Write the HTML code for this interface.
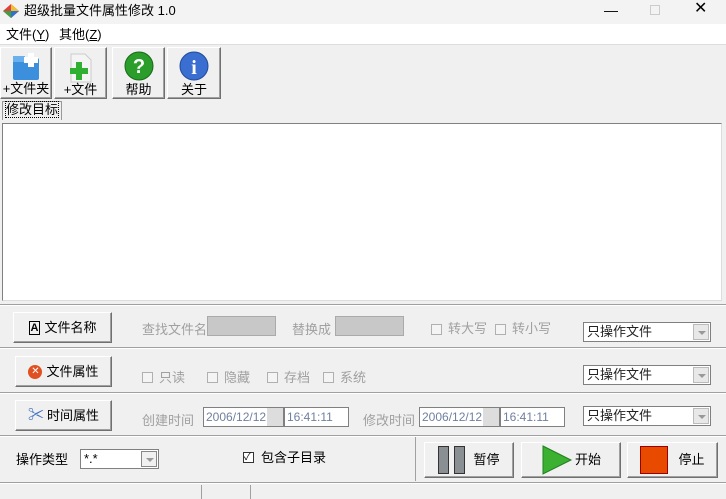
<!DOCTYPE html><html><head><meta charset="utf-8"><style>
*{margin:0;padding:0;box-sizing:border-box}
body{width:726px;height:499px;background:#f0f0f0;font:12px/16px "Liberation Sans","Noto Sans CJK SC",sans-serif;position:relative;overflow:hidden;color:#000}
.a{position:absolute}
.btn{position:absolute;background:#f0f0f0;border:1px solid;border-color:#fff #707070 #707070 #fff;box-shadow:inset -1px -1px #a0a0a0;display:flex;align-items:center;justify-content:center;font-size:13px}
.g{color:#a0a0a0;font-size:13px}
.cb{position:absolute;width:11px;height:11px;border:1px solid #b0b0b0;background:#f4f4f4}
.sel{position:absolute;background:#fff;border:1px solid #808080;height:20px;font-size:13px;line-height:16px;padding:1px 3px;color:#222}
.sel i{position:absolute;right:1px;top:1px;width:16px;height:16px;background:#e8e8e8;border:1px solid #bbb}
.sel i:after{content:"";position:absolute;left:4px;top:6px;border:4px solid transparent;border-top-color:#999}
.hl{position:absolute;left:0;width:726px;height:2px;border-top:1px solid #a0a0a0;border-bottom:1px solid #fff}
.dt{position:absolute;height:20px;border:1px solid #808080;background:#fff;color:#7080a0;font-size:12px;line-height:16px;padding:1px 2px}
</style></head><body>
<div class="a" style="left:0;top:0;width:726px;height:24px;background:#f3f3f3"></div>
<svg class="a" style="left:3px;top:4px" width="16" height="14"><polygon points="0,7 8,0 16,7 8,14" fill="#e04040"/><polygon points="8,0 16,7 8,7" fill="#f0c030"/><polygon points="0,7 8,7 8,14" fill="#40a040"/><polygon points="8,7 16,7 8,14" fill="#3070d0"/></svg>
<div class="a" style="left:24px;top:3px;font-size:13px">超级批量文件属性修改 1.0</div>
<div class="a" style="left:604px;top:2px;font-size:14px">—</div>
<div class="a" style="left:650px;top:5px;width:10px;height:10px;border:1px solid #ccc"></div>
<div class="a" style="left:694px;top:1px;font-size:16px">✕</div>
<div class="a" style="left:0;top:24px;width:726px;height:20px;background:#fff"></div>
<div class="a" style="left:6px;top:27px;font-size:13px">文件(<u>Y</u>)</div>
<div class="a" style="left:59px;top:27px;font-size:13px">其他(<u>Z</u>)</div>
<div class="a" style="left:0;top:44px;width:726px;height:1px;background:#ddd"></div>
<div class="btn" style="left:0;top:47px;width:52px;height:52px;flex-direction:column;justify-content:flex-end;padding-bottom:1px"><svg width="30" height="30" class="a" style="left:11px;top:4px"><rect x="1" y="6" width="26" height="22" rx="2" fill="#3b8fdc"/><rect x="1" y="4" width="12" height="6" fill="#6ab0ee"/><rect x="16" y="1" width="6" height="14" fill="#fff"/><rect x="12" y="5" width="14" height="6" fill="#fff"/></svg><span style="position:relative">+文件夹</span></div>
<div class="btn" style="left:54px;top:47px;width:53px;height:52px;flex-direction:column;justify-content:flex-end"><svg width="30" height="32" class="a" style="left:12px;top:4px"><path d="M4 2h14l6 6v22H4z" fill="#f4f4f4" stroke="#ccc"/><rect x="9" y="10" width="6" height="18" fill="#30b030"/><rect x="3" y="16" width="18" height="6" fill="#30b030"/></svg><span style="position:relative">+文件</span></div>
<div class="btn" style="left:112px;top:47px;width:53px;height:52px;flex-direction:column;justify-content:flex-end"><svg width="30" height="30" class="a" style="left:11px;top:3px"><circle cx="15" cy="15" r="14" fill="#2a9d2a" stroke="#1a6a1a"/><text x="15" y="22" font-size="20" font-weight="bold" fill="#fff" text-anchor="middle" font-family="Liberation Sans">?</text></svg><span style="position:relative">帮助</span></div>
<div class="btn" style="left:167px;top:47px;width:54px;height:52px;flex-direction:column;justify-content:flex-end"><svg width="30" height="30" class="a" style="left:11px;top:3px"><circle cx="15" cy="15" r="14" fill="#3a6ed0" stroke="#204a9a"/><text x="15" y="23" font-size="20" font-weight="bold" fill="#fff" text-anchor="middle" font-family="Liberation Serif">i</text></svg><span style="position:relative">关于</span></div>
<div class="a" style="left:2px;top:101px;width:60px;height:19px;border:1px solid #999;border-bottom:none;background:#f0f0f0;font-size:13px;padding-left:3px"><span style="outline:1px dotted #000">修改目标</span></div>
<div class="a" style="left:2px;top:123px;width:720px;height:178px;background:#fff;border:1px solid #808080;border-right-color:#ddd;border-bottom-color:#ddd"></div>
<div class="hl" style="top:304px"></div>
<div class="btn" style="left:13px;top:312px;width:99px;height:31px"><span style="border:1px solid #000;font-weight:bold;font-size:11px;line-height:12px;padding:0 1px;margin-right:4px">A</span>文件名称</div>
<div class="a g" style="left:142px;top:322px">查找文件名</div>
<div class="a" style="left:207px;top:316px;width:69px;height:20px;background:#c8c8c8;border:1px solid #aaa"></div>
<div class="a g" style="left:292px;top:322px">替换成</div>
<div class="a" style="left:335px;top:316px;width:69px;height:20px;background:#c8c8c8;border:1px solid #aaa"></div>
<div class="cb" style="left:431px;top:324px"></div><div class="a g" style="left:448px;top:321px">转大写</div>
<div class="cb" style="left:495px;top:324px"></div><div class="a g" style="left:512px;top:321px">转小写</div>
<div class="sel" style="left:583px;top:322px;width:128px">只操作文件<i></i></div>
<div class="hl" style="top:347px"></div>
<div class="btn" style="left:15px;top:356px;width:97px;height:31px"><span style="display:inline-block;width:14px;height:14px;border-radius:50%;background:#e05020;color:#fff;font-size:10px;line-height:14px;text-align:center;margin-right:4px">✕</span>文件属性</div>
<div class="cb" style="left:142px;top:372px"></div><div class="a g" style="left:159px;top:370px">只读</div>
<div class="cb" style="left:207px;top:372px"></div><div class="a g" style="left:224px;top:370px">隐藏</div>
<div class="cb" style="left:267px;top:372px"></div><div class="a g" style="left:284px;top:370px">存档</div>
<div class="cb" style="left:323px;top:372px"></div><div class="a g" style="left:340px;top:370px">系统</div>
<div class="sel" style="left:583px;top:365px;width:128px">只操作文件<i></i></div>
<div class="hl" style="top:392px"></div>
<div class="btn" style="left:15px;top:400px;width:97px;height:31px"><span style="color:#4070c0;margin-right:3px;font-size:16px">✂</span>时间属性</div>
<div class="a g" style="left:142px;top:413px">创建时间</div>
<div class="dt" style="left:203px;top:407px;width:81px">2006/12/12<span class="a" style="right:0;top:0;width:16px;height:18px;background:#ddd"></span></div>
<div class="dt" style="left:284px;top:407px;width:65px">16:41:11</div>
<div class="a g" style="left:363px;top:413px">修改时间</div>
<div class="dt" style="left:419px;top:407px;width:81px">2006/12/12<span class="a" style="right:0;top:0;width:16px;height:18px;background:#ddd"></span></div>
<div class="dt" style="left:500px;top:407px;width:65px">16:41:11</div>
<div class="sel" style="left:583px;top:406px;width:128px">只操作文件<i></i></div>
<div class="hl" style="top:435px"></div>
<div class="a" style="left:415px;top:437px;width:1px;height:44px;background:#a0a0a0"></div>
<div class="a" style="left:16px;top:452px;font-size:13px">操作类型</div>
<div class="sel" style="left:80px;top:449px;width:79px;height:20px;color:#000">*.*<i style="background:#f0f0f0;border-color:#888"></i></div>
<div class="cb" style="left:243px;top:452px;border-color:#333;background:#fff;font-size:10px;line-height:9px">✓</div>
<div class="a" style="left:261px;top:450px;font-size:13px">包含子目录</div>
<div class="btn" style="left:424px;top:442px;width:90px;height:36px"><span style="display:inline-block;width:11px;height:28px;background:#8a8f94;border:1px solid #333;margin-right:5px"></span><span style="display:inline-block;width:11px;height:28px;background:#8a8f94;border:1px solid #333;margin-right:8px"></span>暂停</div>
<div class="btn" style="left:521px;top:442px;width:100px;height:36px"><svg width="32" height="30" style="margin-right:2px"><polygon points="2,1 30,15 2,29" fill="#3cb030" stroke="#208020"/></svg>开始</div>
<div class="btn" style="left:627px;top:442px;width:91px;height:36px"><span style="display:inline-block;width:28px;height:28px;background:#e84a00;border:1px solid #900;margin-right:10px"></span>停止</div>
<div class="hl" style="top:482px"></div>
<div class="a" style="left:201px;top:485px;width:1px;height:14px;background:#a0a0a0"></div>
<div class="a" style="left:250px;top:485px;width:1px;height:14px;background:#a0a0a0"></div>
</body></html>
